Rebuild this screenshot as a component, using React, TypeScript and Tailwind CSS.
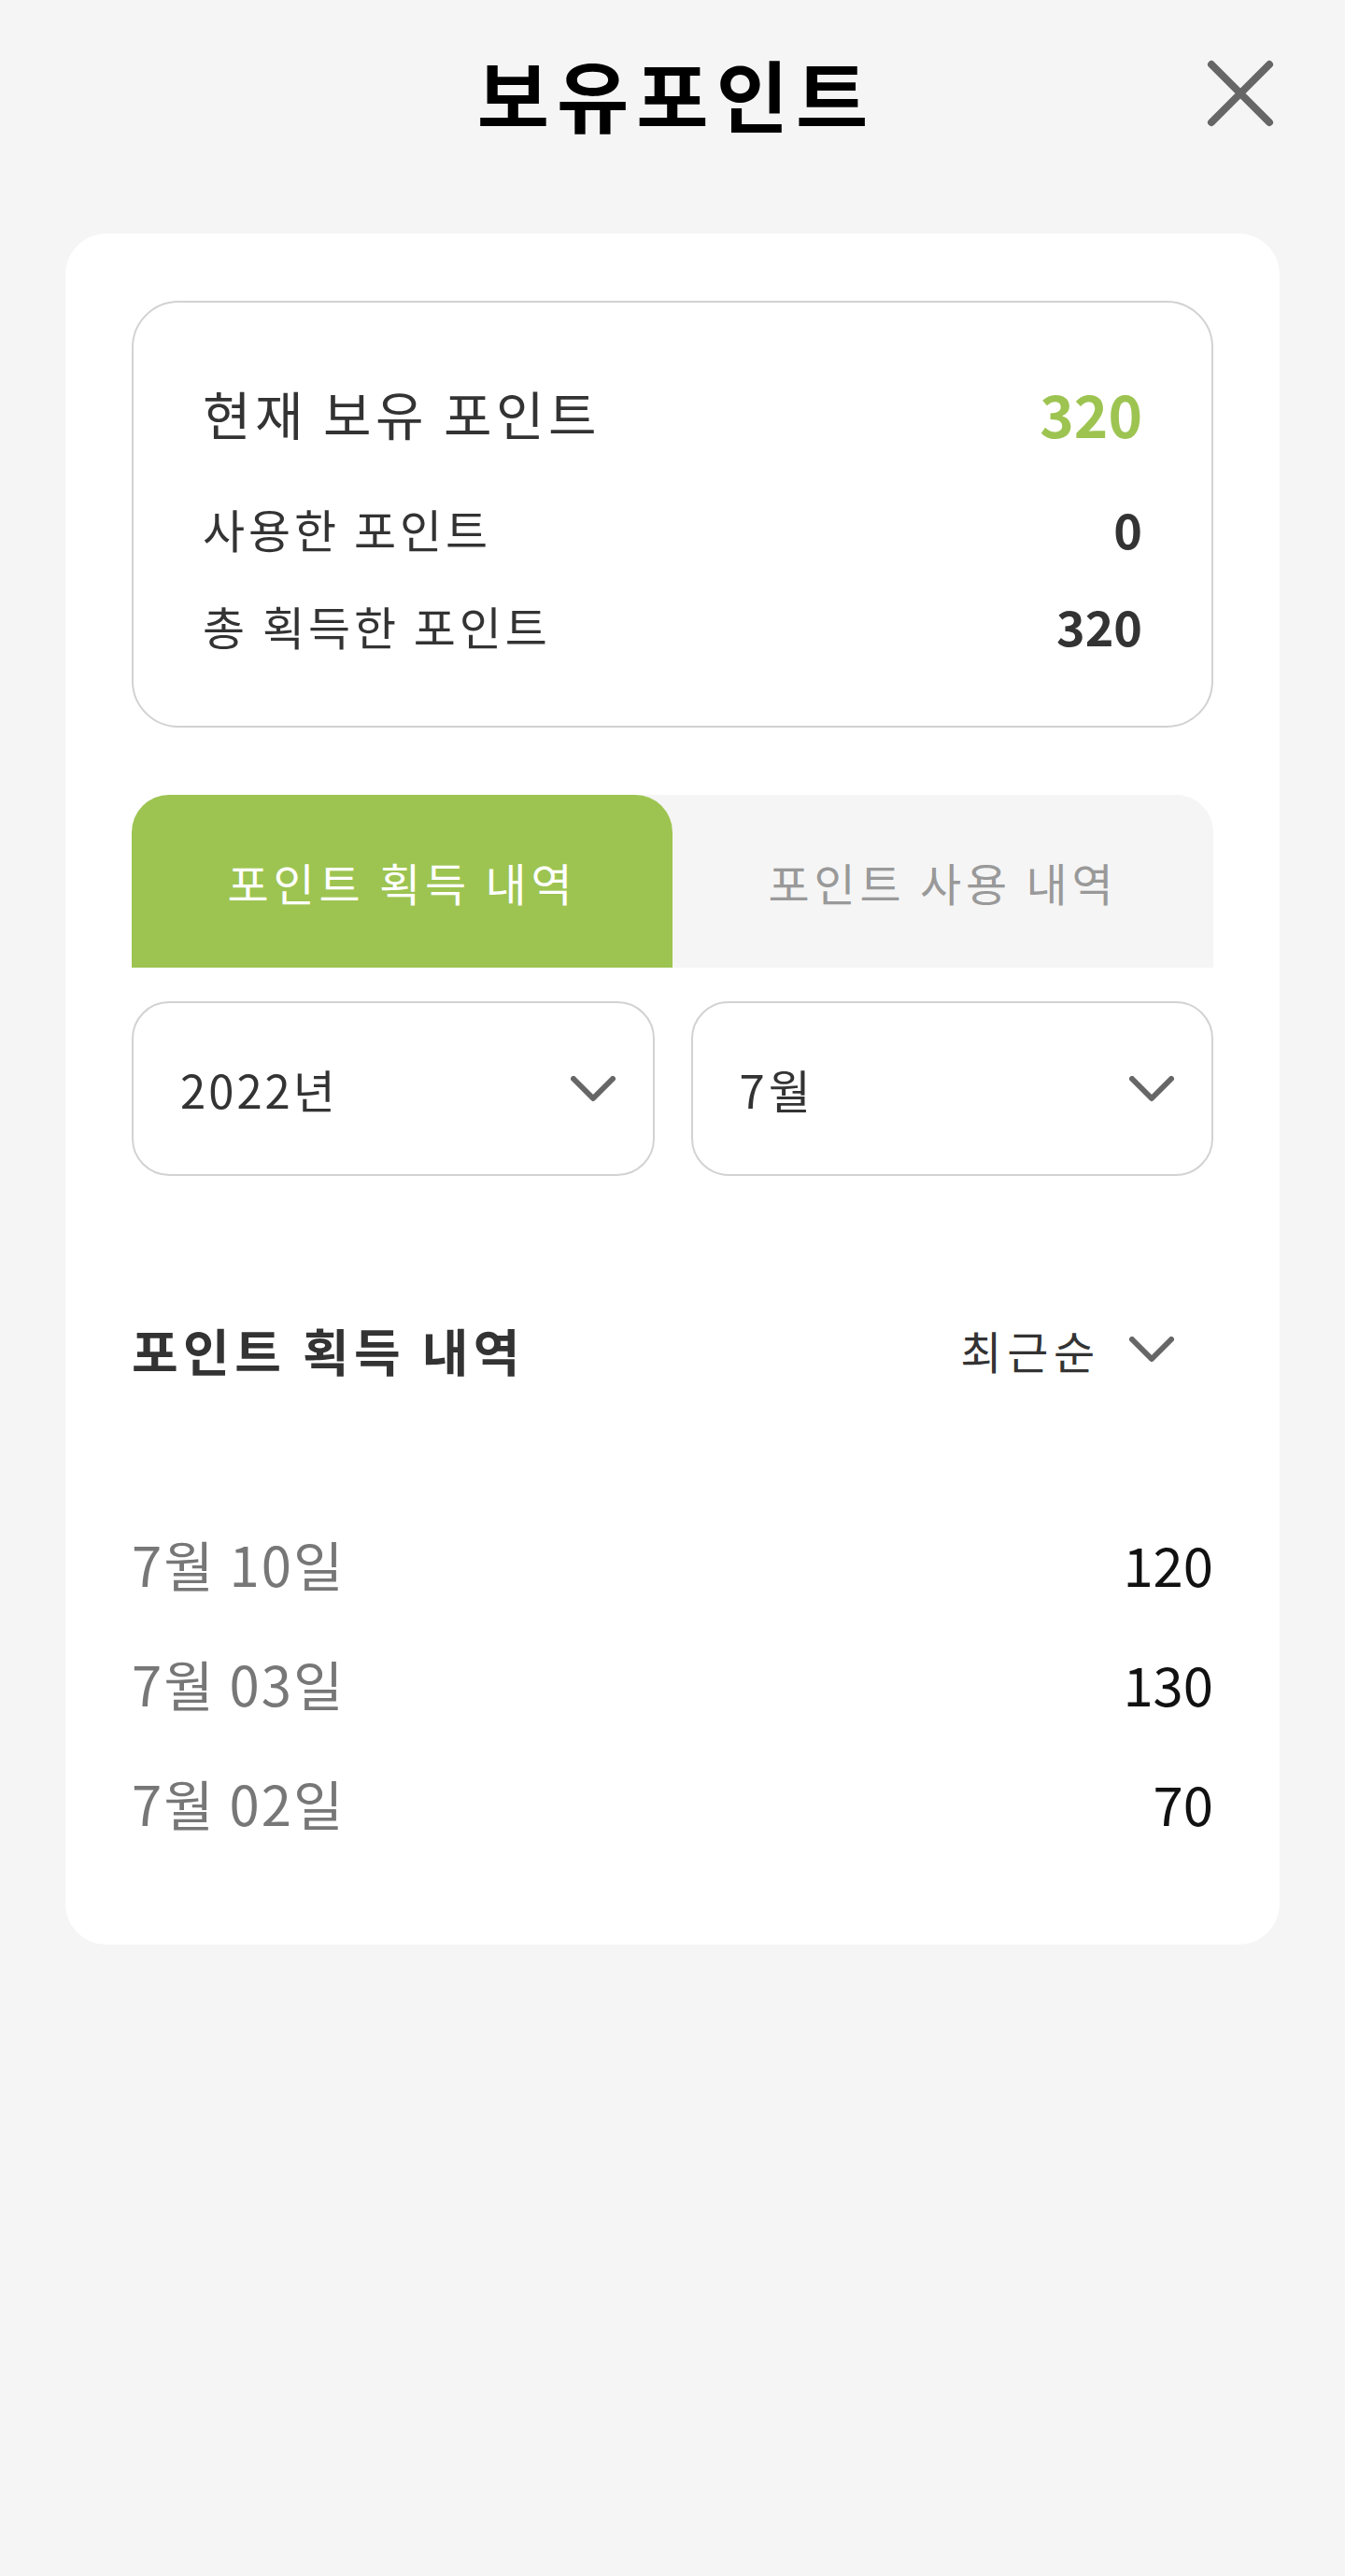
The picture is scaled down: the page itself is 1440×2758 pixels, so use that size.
import { useState } from "react"

const font = { fontFamily: '"Noto Sans CJK KR", "Noto Sans", sans-serif' }

function Chevron({ className = "" }: { className?: string }) {
  return (
    <svg viewBox="0 0 48 28" className={className} fill="none">
      <path d="M3 3 L24 24 L45 3" stroke="#666666" strokeWidth="6" strokeLinecap="round" strokeLinejoin="round" />
    </svg>
  )
}

const summary = [
  { label: "사용한 포인트", value: "0" },
  { label: "총 획득한 포인트", value: "320" },
]

const history = [
  { date: "7월 10일", point: "120" },
  { date: "7월 03일", point: "130" },
  { date: "7월 02일", point: "70" },
]

export default function App() {
  const [tab, setTab] = useState(0)

  return (
    <div className="min-h-[2758px] w-full bg-[#f5f5f5]" style={font}>
      {/* header */}
      <div className="flex h-[200px] items-center px-[76px]">
        <div className="w-[72px]" />
        <h1 className="flex-1 pl-[8px] text-center text-[84px] font-bold leading-[100px] tracking-[8px] text-black">보유포인트</h1>
        <button className="flex h-[72px] w-[72px] items-center justify-center">
          <svg viewBox="0 0 72 72" className="h-[72px] w-[72px]">
            <path d="M5 5 L67 67 M67 5 L5 67" stroke="#666666" strokeWidth="8" strokeLinecap="round" />
          </svg>
        </button>
      </div>

      <div className="mx-[70px] mt-[50px] rounded-[44px] bg-white px-[71px] pb-[88px] pt-[72px]">
        {/* summary box */}
        <div className="box-border h-[457px] rounded-[50px] border-2 border-[#d2d2d2] px-[74px] pt-[78px]">
          <div className="flex items-center justify-between leading-[80px]">
            <span className="text-[56px] tracking-[0.08em] text-[#333]">현재 보유 포인트</span>
            <span className="text-[62px] font-bold text-[#9dc451]">320</span>
          </div>
          {summary.map((s, i) => (
            <div
              key={s.label}
              className={
                i === 0
                  ? "mt-[54px] flex items-center justify-between leading-[60px]"
                  : "mt-[44px] flex items-center justify-between leading-[60px]"
              }
            >
              <span className="text-[49px] tracking-[0.08em] text-[#333]">{s.label}</span>
              <span className="text-[52px] font-bold text-[#333]">{s.value}</span>
            </div>
          ))}
        </div>

        {/* tabs */}
        <div className="mt-[72px] flex h-[185px] rounded-t-[40px] bg-[#f5f5f5]">
          {["포인트 획득 내역", "포인트 사용 내역"].map((t, i) => (
            <button
              key={t}
              onClick={() => setTab(i)}
              className={
                tab === i
                  ? "flex flex-1 items-center justify-center rounded-t-[40px] bg-[#9dc451] text-[48px] tracking-[0.1em] text-white"
                  : "flex flex-1 items-center justify-center rounded-t-[40px] text-[48px] tracking-[0.1em] text-[#999]"
              }
            >
              {t}
            </button>
          ))}
        </div>

        {/* selects */}
        <div className="mt-[36px] grid grid-cols-2 gap-[39px]">
          <div className="flex h-[187px] items-center justify-between rounded-[40px] border-2 border-[#d2d2d2] pl-[50px] pr-[40px]">
            <span className="text-[49px] tracking-[3px] text-[#333]">2022년</span>
            <Chevron className="h-[28px] w-[48px]" />
          </div>
          <div className="flex h-[187px] items-center justify-between rounded-[40px] border-2 border-[#d2d2d2] pl-[50px] pr-[40px]">
            <span className="text-[49px] tracking-[4px] text-[#333]">7월</span>
            <Chevron className="h-[28px] w-[48px]" />
          </div>
        </div>

        {/* list header */}
        <div className="mt-[146px] flex h-[80px] items-center justify-between pr-[42px]">
          <h2 className="text-[54px] font-bold tracking-[0.1em] text-[#333]">포인트 획득 내역</h2>
          <div className="flex items-center gap-[31px]">
            <span className="text-[48px] tracking-[0.12em] text-[#333]">최근순</span>
            <Chevron className="h-[28px] w-[48px]" />
          </div>
        </div>

        {/* list */}
        <div className="mt-[125px]">
          {history.map((h) => (
            <div key={h.date} className="flex h-[128px] items-center justify-between">
              <span className="text-[58px] tracking-[2px] text-[#777]">{h.date}</span>
              <span className="text-[58px] text-[#111]">{h.point}</span>
            </div>
          ))}
        </div>
      </div>
    </div>
  )
}
